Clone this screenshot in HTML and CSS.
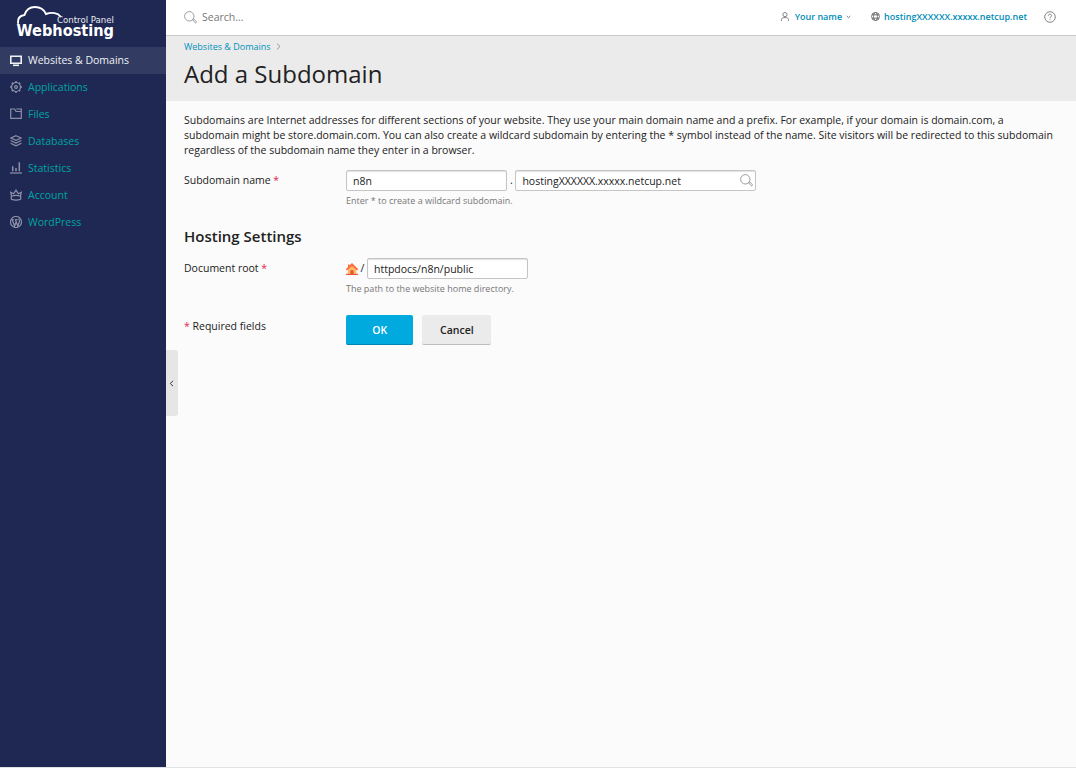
FILE: index.html
```html
<!DOCTYPE html>
<html lang="en">
<head>
<meta charset="utf-8">
<title>Add a Subdomain</title>
<link rel="stylesheet" href="styles.css">
</head>
<body>
<div class="app">
  <aside class="sidebar">
    <a class="logo">
      <svg width="130" height="47" viewBox="0 0 130 47">
        <path class="cloud" d="M18 23C17.500 18 20.500 15.500 24.500 15C26 10 30 7 35 7C40 7 44 9.500 46 14C52 11.800 58 13 60.500 16.500"/>
        <text class="logo-small" x="57" y="23" textLength="57" lengthAdjust="spacingAndGlyphs">Control Panel</text>
        <text class="logo-big" x="16.500" y="36" textLength="97.500" lengthAdjust="spacingAndGlyphs">Webhosting</text>
      </svg>
    </a>
    <nav class="nav">
      <a class="nav-item active"><svg class="icon" viewBox="0 0 12 12"><path class="bold" d="M.8 1.300h10.400v6.900H.8z"/><path class="bold" d="M3 10.300h6"/></svg>Websites &amp; Domains</a>
      <a class="nav-item"><svg class="icon" viewBox="0 0 12 12"><circle cx="6" cy="6" r="4.500"/><circle cx="6" cy="6" r="1.400"/><path class="teeth" d="M6 0v2M6 10v2M0 6h2M10 6h2M1.800 1.800l1.300 1.300M8.900 8.900l1.300 1.300M1.800 10.200l1.300-1.300M8.900 3.100l1.300-1.300"/></svg>Applications</a>
      <a class="nav-item"><svg class="icon" viewBox="0 0 12 12"><path d="M.7 1h4l1.300 2.500h5.300v6.800H.7zM6.300 1h5v2.500"/></svg>Files</a>
      <a class="nav-item"><svg class="icon" viewBox="0 0 12 12"><path d="M6 .7l5.300 2.300L6 5.300.7 3zM.6 5.500L6 8l5.400-2.500M.6 8.300L6 10.900l5.400-2.600"/></svg>Databases</a>
      <a class="nav-item"><svg class="icon" viewBox="0 0 12 12"><path d="M0 11h12"/><path class="bars" d="M2.700 9.300V4.300M6 9.300V6M9.300 9.300V.3"/></svg>Statistics</a>
      <a class="nav-item"><svg class="icon" viewBox="0 0 12 12"><path d="M1.700 7.500L.7 3.300l3 1.400L6 1.200l2.300 3.500 3-1.400-1 4.200M1.300 7.200c2.700-1 6.700-1 9.400 0v3c-2.700 1-6.700 1-9.400 0z"/></svg>Account</a>
      <a class="nav-item"><svg class="icon" viewBox="0 0 12 12"><circle cx="6" cy="6" r="5.500"/><path d="M1.300 3.700h2.400M5 3.700h2.500M2.300 3.800l2.300 6.400L6.200 5.500M5.500 3.800l2.300 6.400 1.600-4.700c.4-1.400-.7-1.600-.5-3"/></svg>WordPress</a>
    </nav>
  </aside>
  <main class="main">
    <header class="topbar">
      <svg class="search-icon" viewBox="0 0 13 13"><circle cx="5.300" cy="5.300" r="4.700"/><path d="M8.700 8.900l1-1 2.500 2.500c.8.900-.4 1.900-1.200 1.200z"/></svg>
      <span class="placeholder">Search...</span>
      <a class="top-link user"><svg class="user-icon" viewBox="0 0 8 9"><circle cx="4" cy="2.600" r="2.100"/><path d="M.5 9V7.500C.7 6.300 1.500 5.900 2.700 5.600h2.600c1.200.3 2 .7 2.200 1.900V9"/></svg>Your name<svg class="caret" viewBox="0 0 5 4"><path d="M.7 1l1.800 1.700L4.300 1"/></svg></a>
      <a class="top-link host"><svg class="globe-icon" viewBox="0 0 9 9"><circle cx="4.500" cy="4.500" r="4"/><ellipse cx="4.500" cy="4.500" rx="2" ry="4"/><path d="M1 2.800h7M1 6.200h7"/></svg><span class="host-name">hostingXXXXXX.xxxxx.netcup.net</span></a>
      <svg class="help-icon" viewBox="0 0 12 12"><circle cx="6" cy="6" r="5.300"/><path d="M4.400 4.700c0-2 3.200-2 3.200 0C7.600 5.800 6 5.800 6 7.200M6 8.200v1"/></svg>
    </header>
    <section class="heading">
      <div class="crumbs"><span>Websites &amp; Domains</span><svg class="crumb-arrow" viewBox="0 0 5 7"><path d="M1 .6l3 2.900-3 2.900"/></svg></div>
      <h1>Add a Subdomain</h1>
    </section>
    <section class="content">
      <p class="intro">Subdomains are Internet addresses for different sections of your website. They use your main domain name and a prefix. For example, if your domain is domain.com, a<br>subdomain might be store.domain.com. You can also create a wildcard subdomain by entering the * symbol instead of the name. Site visitors will be redirected to this subdomain<br>regardless of the subdomain name they enter in a browser.</p>
      <div class="row">
        <div class="label">Subdomain name <b class="req">*</b></div>
        <div class="field">
          <div class="controls"><div class="input">n8n</div><span class="dot">.</span><div class="input wide">hostingXXXXXX.xxxxx.netcup.net<svg class="search-icon" viewBox="0 0 13 13"><circle cx="5.300" cy="5.300" r="4.700"/><path d="M8.700 8.900l1-1 2.500 2.500c.8.900-.4 1.900-1.200 1.200z"/></svg></div></div>
          <div class="hint">Enter * to create a wildcard subdomain.</div>
        </div>
      </div>
      <h2>Hosting Settings</h2>
      <div class="row">
        <div class="label">Document root <b class="req">*</b></div>
        <div class="field">
          <div class="controls"><svg class="home" viewBox="0 0 12 12"><path fill="#ffb868" d="M1.700 6L6 2l4.300 4v5H1.700z"/><path fill="#ff6a3c" d="M2 1.500h1.500v3H2zM6 0l6 6v1h-1.500L6 3 1.500 7H0V6z"/><path fill="#e0572c" d="M4.500 7.200h3V11h-3z"/><path fill="#ef5a30" d="M0 10.800h12V12H0z"/></svg><span class="slash">/</span><div class="input">httpdocs/n8n/public</div></div>
          <div class="hint">The path to the website home directory.</div>
        </div>
      </div>
      <div class="row actions">
        <div class="label"><b class="req">*</b> Required fields</div>
        <button class="btn primary">OK</button>
        <button class="btn">Cancel</button>
      </div>
    </section>
    <button class="collapse"><svg viewBox="0 0 5 7"><path d="M4 .8L1.300 3.500 4 6.200"/></svg></button>
  </main>
</div>
</body>
</html>
```
FILE: styles.css
```css
* { box-sizing: border-box; }
body { margin: 0; font: 10.51px/15px "Open Sans", sans-serif; color: #222; background: #fbfbfb; }
svg { display: block; flex: none; fill: none; }
.app { display: flex; height: 768px; border-bottom: 1px solid #dfe3e6; }
.sidebar { width: 166px; flex: none; background: #1f2853; }
.logo { display: block; height: 47px; }
.cloud { stroke: #fff; stroke-width: 1.900; stroke-linecap: round; }
.logo-small { font: 8px "DejaVu Sans", sans-serif; fill: #e9eaf0; }
.logo-big { font: bold 15px "DejaVu Sans", sans-serif; fill: #fff; }
.nav-item { display: flex; align-items: center; height: 27px; padding-left: 10px; gap: 6px; color: #00a5a0; }
.nav-item.active { background: #323c62; color: #f0f1f5; }
.icon { width: 12px; height: 12px; margin-bottom: 1px; stroke: #8c91a8; stroke-width: 1.2; }
.active .icon { margin-bottom: 0; stroke: #f0f1f5; }
.icon .bold { stroke-width: 1.600; }
.icon .teeth, .icon .bars { stroke-width: 1.500; }
.main { position: relative; flex: 1; min-width: 0; }
.topbar { display: flex; align-items: center; height: 36px; padding: 0 20px 1px 18px; background: #fff; border-bottom: 1px solid #c9c9c9; }
.search-icon { width: 13px; height: 13px; stroke: #858585; stroke-width: .8; }
.placeholder { margin-left: 5px; color: #777; }
.top-link { display: flex; align-items: center; padding-bottom: 1px; font-size: 9px; font-weight: 600; color: #008db8; }
.user { margin-left: auto; }
.user-icon { width: 8px; height: 9px; margin-right: 6px; stroke: #777; stroke-width: .9; }
.caret { width: 5px; height: 4px; margin: 1px 0 0 4px; stroke: #777; stroke-width: 1; }
.host { margin-left: 20px; }
.globe-icon { width: 9px; height: 9px; margin-right: 4px; stroke: #666; stroke-width: .9; }
.help-icon { width: 12px; height: 12px; margin-left: 17px; stroke: #777; stroke-width: .9; }
.heading { height: 65px; padding: 3px 18px 0; background: #ebebeb; }
.crumbs { display: flex; align-items: center; font-size: 9px; color: #0091bb; }
.crumb-arrow { width: 5px; height: 7px; margin-left: 5px; stroke: #999; }
h1 { margin: 4px 0 0; font-size: 24px; line-height: 32px; font-weight: 400; }
.content { padding: 12px 18px 0; }
.intro { margin: 0 0 12px; white-space: nowrap; letter-spacing: .005px; }
.row { display: flex; }
.label { width: 162px; padding-top: 3px; }
.req { font-weight: 400; color: #e0244f; }
.controls { display: flex; align-items: center; height: 21px; }
.input { display: flex; align-items: center; justify-content: space-between; width: 161.4px; height: 21px; padding: 1px 2px 0 6px; border: 1px solid #c5c5c5; border-radius: 2px; background: #fff; box-shadow: inset 0 1px 1px #e2e2e2; }
.input.wide { width: 240.5px; }
.input .search-icon { margin-bottom: 2px; }
.dot { width: 8px; text-align: center; }
.slash { width: 9px; text-align: center; }
.home { width: 12px; height: 12px; }
.hint { margin-top: 2px; font-size: 9px; color: #777; }
h2 { margin: 18px 0 12px; font-size: 15px; line-height: 20px; font-weight: 600; }
.actions { margin-top: 19px; }
.actions .label { padding-top: 4px; }
.btn { width: 69px; height: 30px; margin-right: 9px; padding: 0; font: 600 10.5px "Open Sans", sans-serif; color: #222; background: #ebebeb; border: 0; border-bottom: 1px solid #bdbdbd; border-radius: 2px; }
.primary { width: 67.4px; color: #fff; background: #00a9de; border-bottom-color: #0086b1; }
.collapse { position: absolute; left: 0; top: 350px; display: flex; align-items: center; width: 12px; height: 66px; padding: 0 0 0 3px; background: #e6e6e6; border: 0; border-radius: 0 3px 3px 0; }
.collapse svg { width: 5px; height: 7px; stroke: #333; }
```
